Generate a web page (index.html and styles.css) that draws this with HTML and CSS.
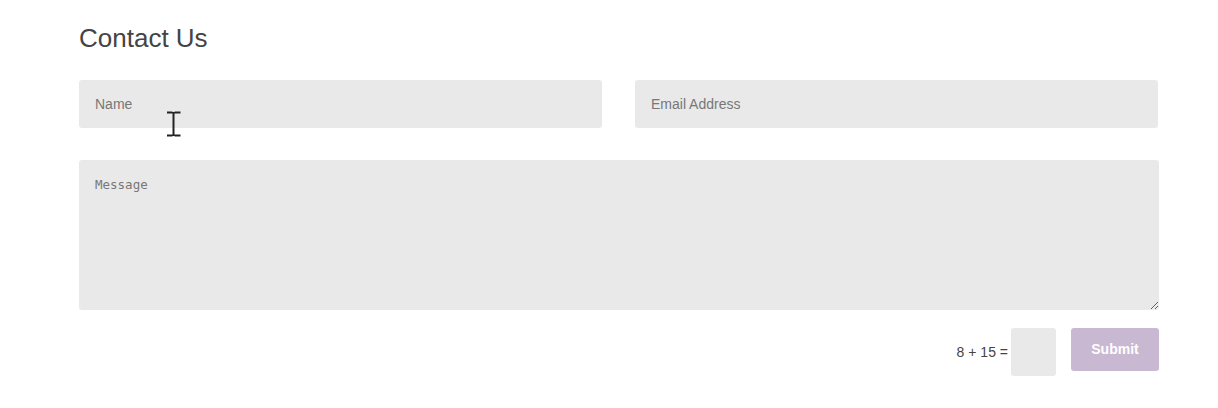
FILE: index.html
```html
<!DOCTYPE html>
<html>

    <head>
        <link rel="stylesheet" href="styles.css">
    </head>

    <body>
        <div class="contact">
            <h1>Contact Us</h1>
            <form class="contact-form">
                <div class="row">
                    <input class="field" type="text" placeholder="Name">
                    <input class="field" type="email" placeholder="Email Address">
                </div>
                <textarea class="message" placeholder="Message"></textarea>
                <div class="actions">
                    <label class="captcha">8 + 15 = <input class="captcha-input" type="text"></label>
                    <button class="submit" type="button">Submit</button>
                </div>
            </form>
            <svg class="cursor" width="16" height="26" viewBox="0 0 16 26">
                <path d="M1 1.5h5.5M8.5 1.5h6M7.5 1v24M1 24.5h5.5M8.5 24.5h6" stroke="#222" stroke-width="2" fill="none"/>
            </svg>
        </div>
    </body>

</html>
```

FILE: styles.css
```css
body {
    margin: 0;
    font-family: "Liberation Sans", Arial, sans-serif;
    background: #fff;
}
.contact {
    position: relative;
    width: 1080px;
    margin-left: 79px;
    padding-top: 23px;
}
h1 {
    margin: 0 0 27px;
    font-size: 26px;
    line-height: 30px;
    font-weight: normal;
    color: #444;
}
.row {
    display: grid;
    grid-template-columns: 523px 523px;
    column-gap: 33px;
    margin-bottom: 32px;
}
.field {
    height: 48px;
    box-sizing: border-box;
    padding: 0 16px;
    border: 0;
    border-radius: 3px;
    background: #e9e9e9;
    font-family: "Liberation Sans", Arial, sans-serif;
    font-size: 14px;
    color: #333;
}
.field::placeholder {
    color: #777;
}
.message {
    display: block;
    width: 1080px;
    height: 150px;
    box-sizing: border-box;
    padding: 17px 16px;
    border: 0;
    border-radius: 3px;
    background: #e9e9e9;
    font-family: "DejaVu Sans Mono", monospace;
    font-size: 12.5px;
    line-height: 16px;
}
.message::placeholder {
    color: #777;
}
.actions {
    display: flex;
    justify-content: flex-end;
    align-items: flex-start;
    gap: 15px;
    margin-top: 18px;
}
.captcha {
    display: flex;
    align-items: center;
    gap: 3px;
    font-size: 14px;
    color: #444;
}
.captcha-input {
    width: 45px;
    height: 48px;
    box-sizing: border-box;
    border: 0;
    border-radius: 3px;
    background: #e9e9e9;
}
.submit {
    width: 88px;
    height: 43px;
    border: 0;
    border-radius: 3px;
    background: #c9b8d2;
    color: #fff;
    font-family: "Liberation Sans", Arial, sans-serif;
    font-size: 14px;
    font-weight: bold;
    padding: 0 0 2px;
}
.cursor {
    position: absolute;
    left: 87px;
    top: 111px;
}
```
